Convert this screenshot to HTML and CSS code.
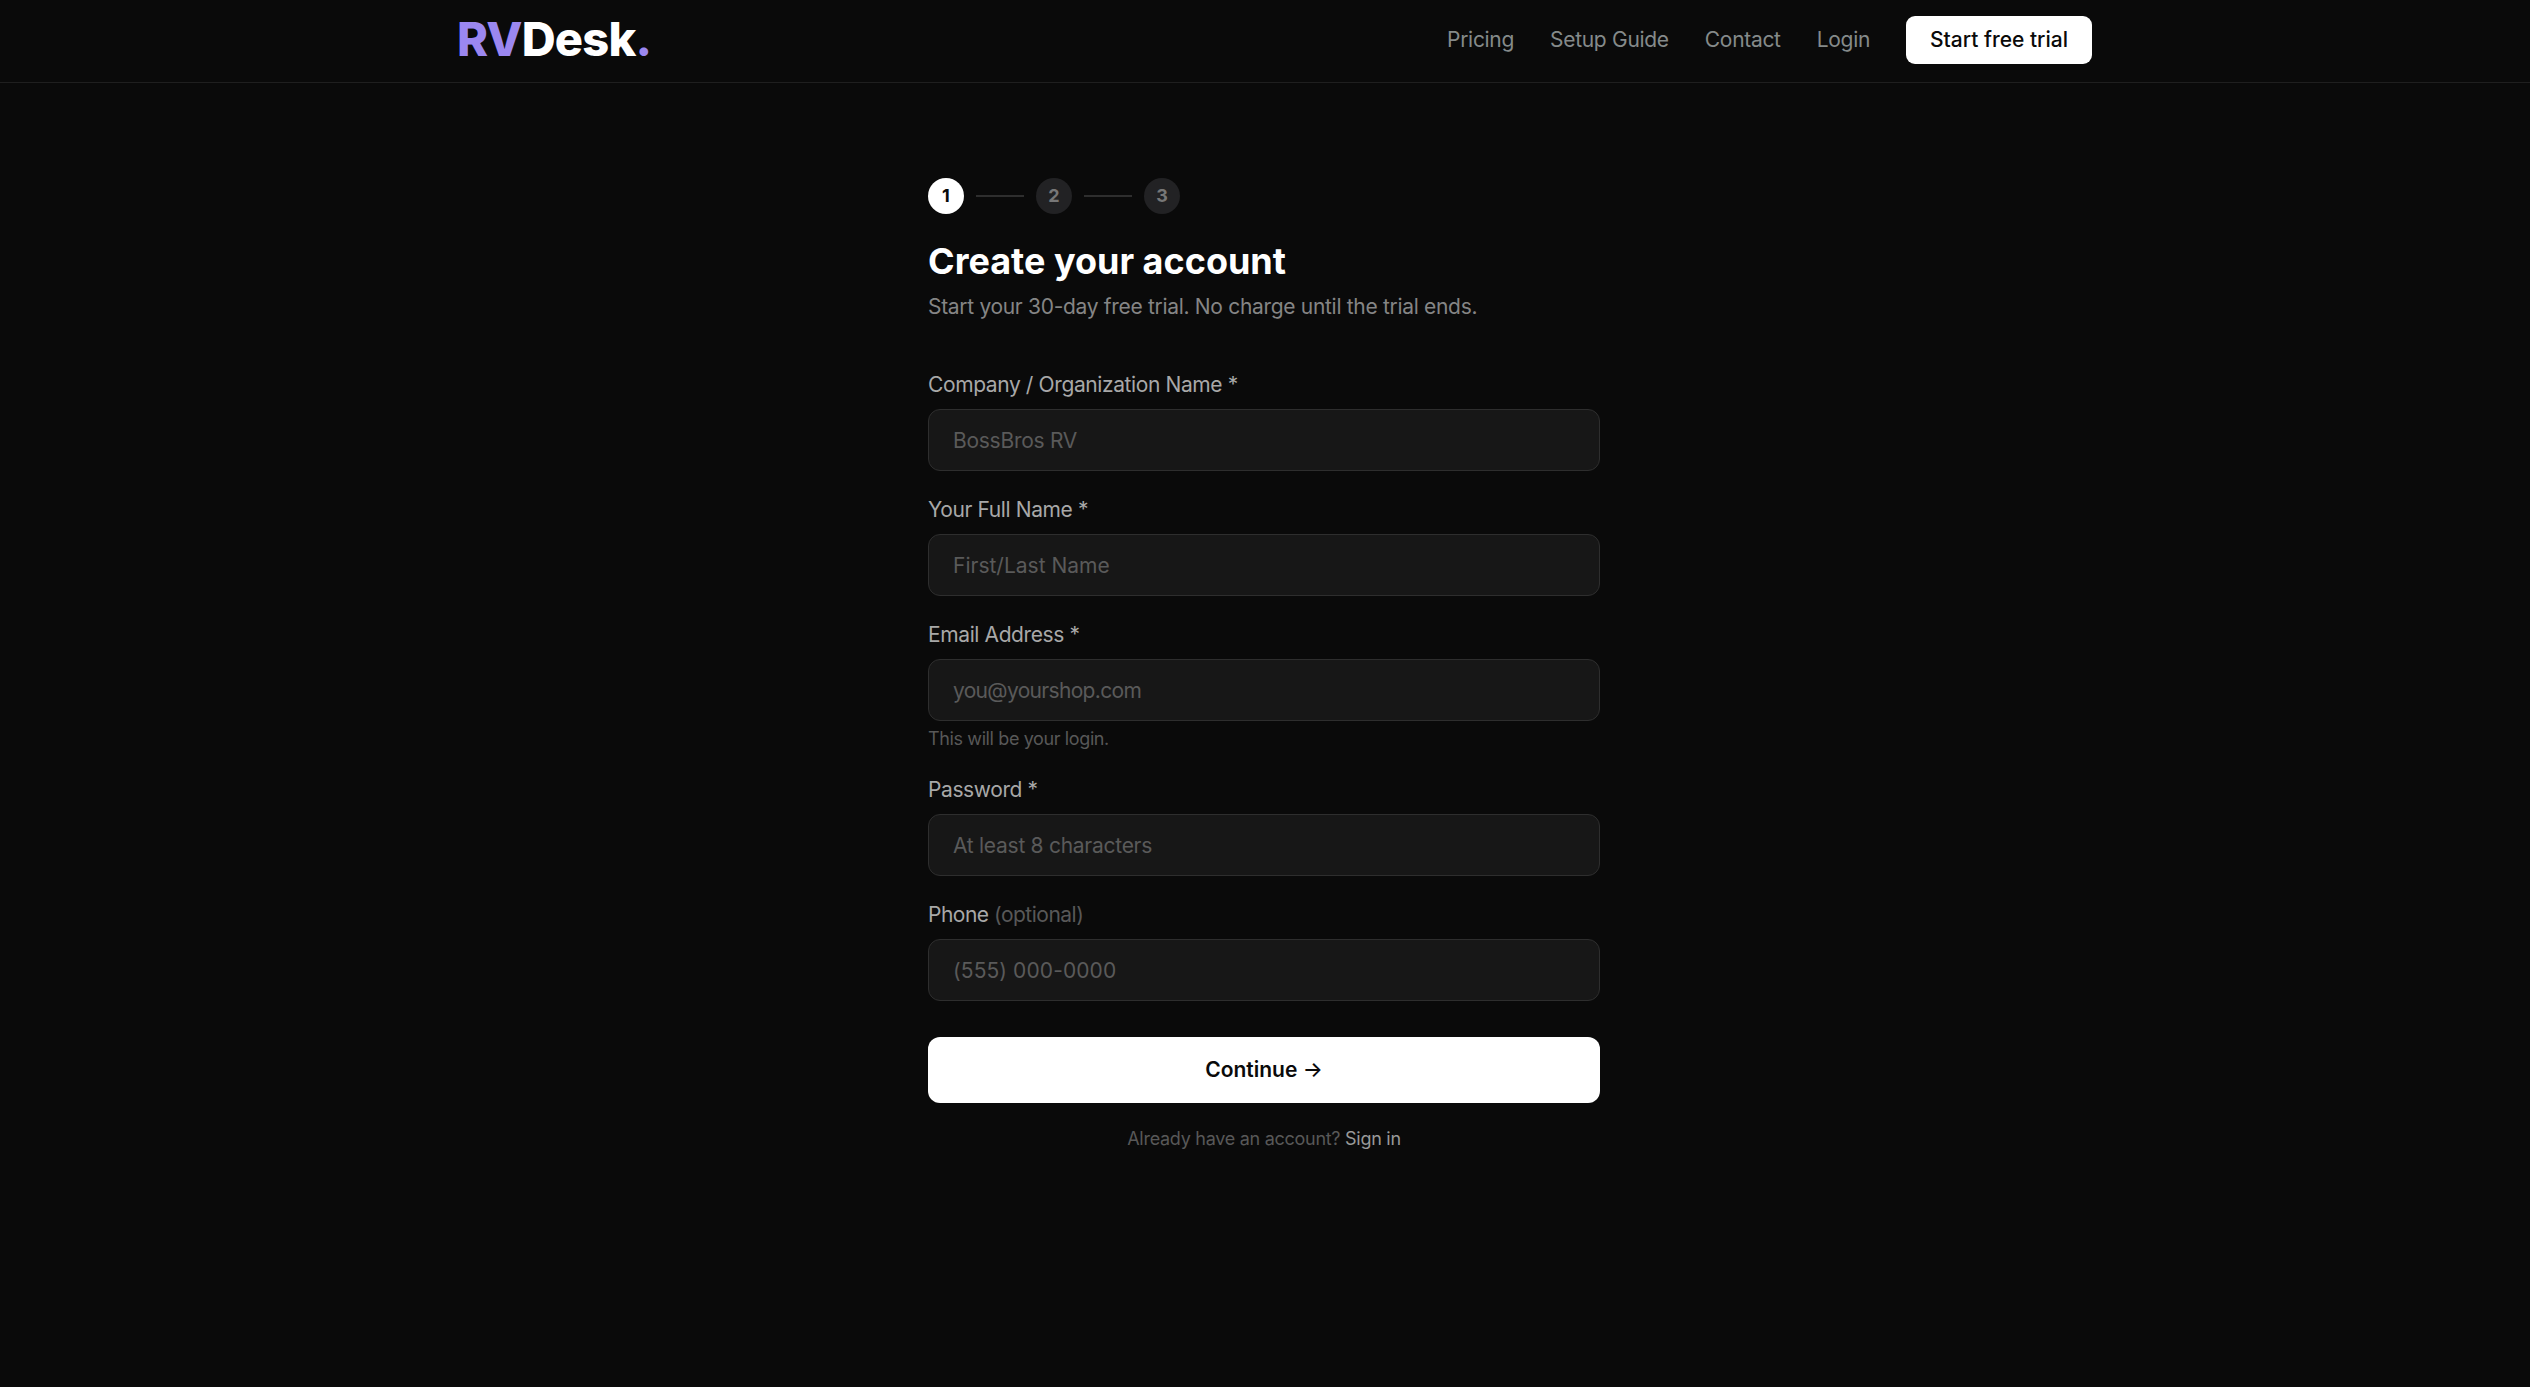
FILE: index.html
```html
<!DOCTYPE html>
<html lang="en">
<head>
    <meta charset="UTF-8">
    <meta name="viewport" content="width=device-width, initial-scale=1.0">
    <title>RVDesk - Create your account</title>
    <link rel="stylesheet" href="styles.css">
</head>
<body>
    <header class="header">
        <div class="header-inner">
            <a href="#" class="logo"><span class="accent">RV</span>Desk<span class="accent">.</span></a>
            <nav class="nav">
                <a href="#" class="nav-link">Pricing</a>
                <a href="#" class="nav-link">Setup Guide</a>
                <a href="#" class="nav-link">Contact</a>
                <a href="#" class="nav-link">Login</a>
                <a href="#" class="trial-btn">Start free trial</a>
            </nav>
        </div>
    </header>

    <main class="container">
        <div class="steps">
            <div class="step active">1</div>
            <div class="step-line"></div>
            <div class="step">2</div>
            <div class="step-line"></div>
            <div class="step">3</div>
        </div>

        <h1 class="title">Create your account</h1>
        <p class="subtitle">Start your 30-day free trial. No charge until the trial ends.</p>

        <form id="signupForm">
            <div class="form-group">
                <label for="company" class="label">Company / Organization Name *</label>
                <input type="text" id="company" class="input" placeholder="BossBros RV" required>
            </div>
            <div class="form-group">
                <label for="fullName" class="label">Your Full Name *</label>
                <input type="text" id="fullName" class="input input-name" placeholder="First/Last Name" required>
            </div>
            <div class="form-group">
                <label for="email" class="label">Email Address *</label>
                <input type="email" id="email" class="input input-email" placeholder="you@yourshop.com" required>
                <p class="hint">This will be your login.</p>
            </div>
            <div class="form-group">
                <label for="password" class="label">Password *</label>
                <input type="password" id="password" class="input" placeholder="At least 8 characters" required>
            </div>
            <div class="form-group">
                <label for="phone" class="label label-phone">Phone <span class="optional">(optional)</span></label>
                <input type="tel" id="phone" class="input input-phone" placeholder="(555) 000-0000">
            </div>

            <button type="submit" class="submit-btn">Continue <span class="arrow">→</span></button>
        </form>

        <p class="signin">Already have an account? <a href="#">Sign in</a></p>
    </main>
</body>
</html>
```
FILE: styles.css
```css
* {
    margin: 0;
    padding: 0;
    box-sizing: border-box;
}

body {
    font-family: Inter, 'Liberation Sans', sans-serif;
    font-size: 21px;
    line-height: 30px;
    background: #0a0a0a;
    color: #fff;
    min-height: 100vh;
    padding-right: 2px;
}

a {
    color: inherit;
    text-decoration: none;
}

.header {
    height: 83px;
    margin-right: -2px;
    padding-right: 2px;
    border-bottom: 1px solid #1f1f1f;
}

.header-inner {
    display: flex;
    align-items: center;
    justify-content: space-between;
    max-width: 1728px;
    height: 80px;
    margin: 0 auto;
    padding: 0 36px 0 57px;
}

.logo {
    padding-bottom: 2px;
    font-size: 47px;
    font-weight: 800;
    letter-spacing: -0.8px;
}

.accent {
    color: #9b87f0;
}

.nav {
    display: flex;
    align-items: center;
    gap: 36px;
}

.nav-link {
    color: #858a8a;
    letter-spacing: -0.3px;
}

.trial-btn {
    padding: 9px 24px;
    background: #fff;
    color: #0a0a0a;
    border-radius: 9px;
    font-weight: 500;
}

.container {
    width: 672px;
    margin: 0 auto;
    padding-top: 95px;
}

.steps {
    display: flex;
    align-items: center;
    gap: 12px;
    margin-bottom: 24px;
}

.step {
    display: flex;
    align-items: center;
    justify-content: center;
    width: 36px;
    height: 36px;
    border-radius: 50%;
    background: #222224;
    color: #777;
    font-size: 18px;
    font-weight: 700;
}

.step.active {
    background: #fff;
    color: #0a0a0a;
}

.step-line {
    width: 48px;
    height: 2px;
    background: #2e2e2e;
}

.title {
    font-size: 36px;
    line-height: 46px;
    font-weight: 700;
    margin-bottom: 8px;
}

.subtitle {
    color: #858585;
    letter-spacing: -0.31px;
    margin-bottom: 48px;
}

.form-group {
    margin-bottom: 24px;
}

.label {
    display: block;
    color: #a8a8a8;
    letter-spacing: -0.39px;
    margin-bottom: 9px;
}

.label-phone {
    letter-spacing: -0.5px;
}

.optional {
    color: #585858;
}

.input {
    display: block;
    width: 100%;
    height: 62px;
    padding: 0 24px;
    background: #171717;
    border: 1px solid #2e2e2e;
    border-radius: 12px;
    color: #fff;
    font: inherit;
    letter-spacing: -0.27px;
}

.input-name {
    letter-spacing: 0;
}

.input-email {
    letter-spacing: -0.68px;
}

.input-phone {
    letter-spacing: 0.1px;
}

.input::placeholder {
    color: #5a5a5a;
}

.hint {
    margin-top: 6px;
    font-size: 18px;
    line-height: 24px;
    letter-spacing: -0.38px;
    color: #585858;
}

.submit-btn {
    display: block;
    width: 100%;
    height: 66px;
    margin-top: 36px;
    background: #fff;
    color: #0a0a0a;
    border: none;
    border-radius: 12px;
    font: inherit;
    font-weight: 600;
}

.arrow {
    font-weight: 500;
}

.signin {
    margin-top: 24px;
    font-size: 18px;
    line-height: 24px;
    letter-spacing: -0.28px;
    text-align: center;
    color: #585858;
}

.signin a {
    color: #999;
}
```
